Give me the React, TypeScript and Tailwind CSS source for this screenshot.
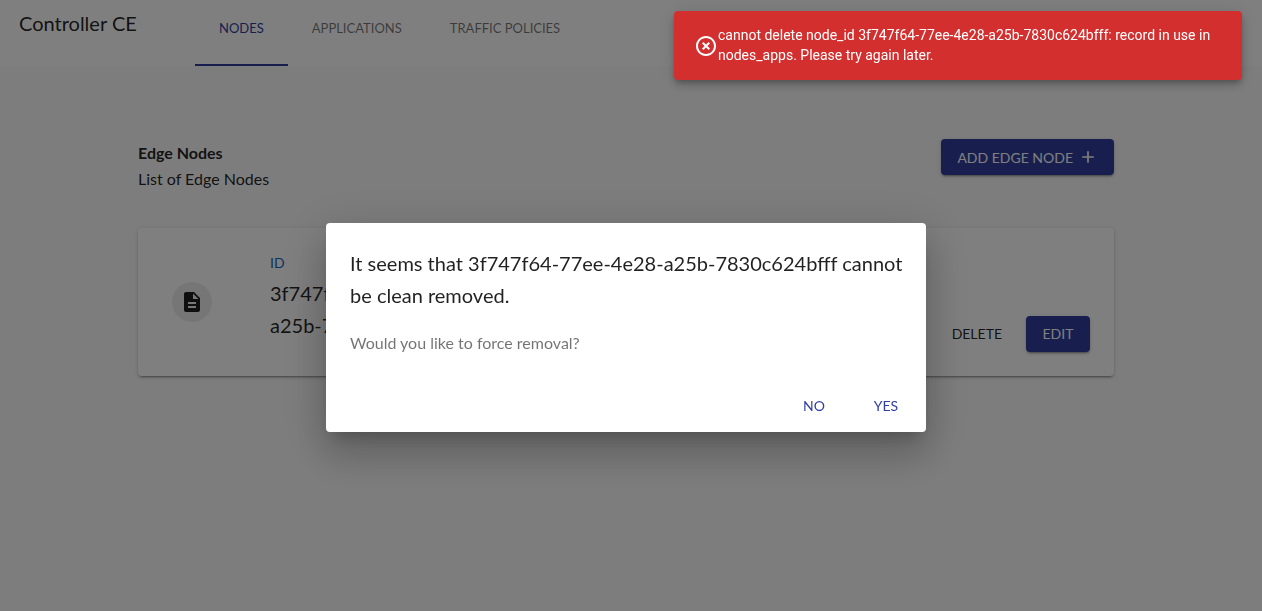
import React from 'react';

const NODE_ID = '3f747f64-77ee-4e28-a25b-7830c624bfff';

const TABS = ['NODES', 'APPLICATIONS', 'TRAFFIC POLICIES'];

const raised =
  'shadow-[0_3px_1px_-2px_rgba(0,0,0,0.2),0_2px_2px_0_rgba(0,0,0,0.14),0_1px_5px_0_rgba(0,0,0,0.12)]';

function Header() {
  return (
    <header className="flex h-[66px] bg-white pl-[19px]">
      <h1 className="w-44 shrink-0 pt-[7px] text-[20px] leading-8">Controller CE</h1>
      <nav className="flex">
        {TABS.map((tab, i) => (
          <a
            key={tab}
            href="#"
            aria-current={i === 0 ? 'page' : undefined}
            className={
              i === 0
                ? 'border-b-2 border-[#303f9f] px-6 pt-[18px] text-[13px] leading-5 text-[#303f9f]'
                : 'px-6 pt-[18px] text-[13px] leading-5 text-black/55'
            }
          >
            {tab}
          </a>
        ))}
      </nav>
    </header>
  );
}

function NodeCard() {
  return (
    <article className={`mt-9 flex h-[148px] rounded bg-white p-6 ${raised}`}>
      <div className="flex w-[108px] shrink-0 items-center pl-[10px]">
        <span className="flex size-10 items-center justify-center rounded-full bg-[#ededed]">
          <svg viewBox="0 0 24 24" className="size-6" fill="currentColor" aria-hidden="true">
            <path d="M14 2H6c-1.1 0-1.99.9-1.99 2L4 20c0 1.1.89 2 1.99 2H18c1.1 0 2-.9 2-2V8l-6-6zm2 16H8v-2h8v2zm0-4H8v-2h8v2zm-3-5V3.5L18.5 9H13z" />
          </svg>
        </span>
      </div>
      <div className="w-60">
        <p className="text-[14px] leading-[22px] text-[#1565c0]">ID</p>
        <p className="mt-[3px] text-[20px] leading-8">{NODE_ID}</p>
      </div>
      <div className="ml-auto flex items-end gap-4">
        <button type="button" className="h-9 rounded px-2 text-[14px] leading-5">
          DELETE
        </button>
        <button
          type="button"
          className={`h-9 w-16 rounded bg-[#303f9f] text-[14px] leading-5 text-white ${raised}`}
        >
          EDIT
        </button>
      </div>
    </article>
  );
}

function RemovalDialog() {
  return (
    <div className="fixed inset-0 flex items-center justify-center bg-black/50 pt-11 pr-[10px]">
      <section
        role="dialog"
        aria-modal="true"
        aria-labelledby="removal-title"
        className="w-full max-w-[600px] rounded bg-white shadow-[0_11px_15px_-7px_rgba(0,0,0,0.2),0_24px_38px_3px_rgba(0,0,0,0.14),0_9px_46px_8px_rgba(0,0,0,0.12)]"
      >
        <div className="pt-6 pr-4 pl-6">
          <h2 id="removal-title" className="text-[20px] leading-8">
            It seems that {NODE_ID} cannot be clean removed.
          </h2>
          <p className="mt-5 text-[16px] leading-6 text-black/55">
            Would you like to force removal?
          </p>
        </div>
        <div className="mt-[25px] flex justify-end gap-2 p-2">
          <button type="button" className="h-9 w-16 rounded text-[14px] leading-5 text-[#303f9f]">
            NO
          </button>
          <button type="button" className="h-9 w-16 rounded text-[14px] leading-5 text-[#303f9f]">
            YES
          </button>
        </div>
      </section>
    </div>
  );
}

function ErrorToast() {
  return (
    <div
      role="alert"
      className="fixed top-[11px] right-5 flex w-[568px] items-center rounded bg-[#d32f2f] pt-[14px] pr-4 pb-[15px] pl-5 font-['Roboto',sans-serif] text-[14px] leading-5 text-white shadow-[0_3px_5px_-1px_rgba(0,0,0,0.2),0_6px_10px_0_rgba(0,0,0,0.14),0_1px_18px_0_rgba(0,0,0,0.12)]"
    >
      <svg viewBox="0 0 24 24" className="mt-0.5 size-6 shrink-0" fill="currentColor" aria-hidden="true">
        <path d="M14.59 8 12 10.59 9.41 8 8 9.41 10.59 12 8 14.59 9.41 16 12 13.41 14.59 16 16 14.59 13.41 12 16 9.41 14.59 8zM12 2C6.47 2 2 6.47 2 12s4.47 10 10 10 10-4.47 10-10S17.53 2 12 2zm0 18c-4.41 0-8-3.59-8-8s3.59-8 8-8 8 3.59 8 8-3.59 8-8 8z" />
      </svg>
      <p>cannot delete node_id {NODE_ID}: record in use in nodes_apps. Please try again later.</p>
    </div>
  );
}

export default function App() {
  return (
    <div className="min-h-screen bg-[#fafafa] font-['Lato',sans-serif] text-black/87">
      <Header />
      <main className="pr-[10px]">
        <div className="mx-auto max-w-5xl px-6 pt-[73px]">
          <div className="flex items-start justify-between">
            <div className="pt-px text-[16px] leading-[26px]">
              <h2 className="font-bold">Edge Nodes</h2>
              <p>List of Edge Nodes</p>
            </div>
            <button
              type="button"
              className={`flex h-9 items-center gap-[5px] rounded bg-[#303f9f] px-4 text-[14px] text-white ${raised}`}
            >
              ADD EDGE NODE
              <svg viewBox="0 0 24 24" className="size-5" fill="currentColor" aria-hidden="true">
                <path d="M19 13h-6v6h-2v-6H5v-2h6V5h2v6h6v2z" />
              </svg>
            </button>
          </div>
          <NodeCard />
        </div>
      </main>
      <RemovalDialog />
      <ErrorToast />
    </div>
  );
}
